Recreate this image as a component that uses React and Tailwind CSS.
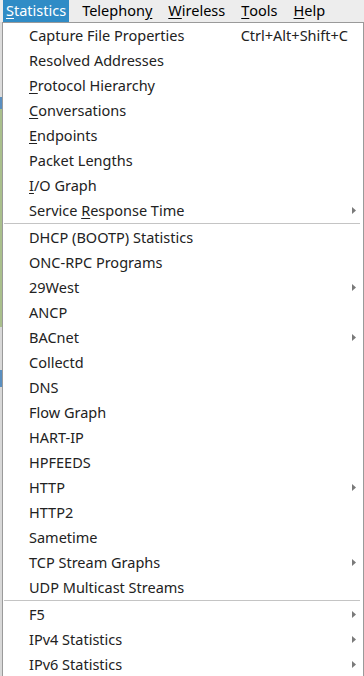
const items = [
  { label: 'Capture File Properties', shortcut: 'Ctrl+Alt+Shift+C' },
  { label: 'Resolved Addresses' },
  { label: 'Protocol Hierarchy', u: 0 },
  { label: 'Conversations', u: 0 },
  { label: 'Endpoints', u: 0 },
  { label: 'Packet Lengths' },
  { label: 'I/O Graph', u: 0 },
  { label: 'Service Response Time', u: 8, sub: true },
  'sep',
  { label: 'DHCP (BOOTP) Statistics' },
  { label: 'ONC-RPC Programs' },
  { label: '29West', sub: true },
  { label: 'ANCP' },
  { label: 'BACnet', sub: true },
  { label: 'Collectd' },
  { label: 'DNS' },
  { label: 'Flow Graph' },
  { label: 'HART-IP' },
  { label: 'HPFEEDS' },
  { label: 'HTTP', sub: true },
  { label: 'HTTP2' },
  { label: 'Sametime' },
  { label: 'TCP Stream Graphs', sub: true },
  { label: 'UDP Multicast Streams' },
  'sep',
  { label: 'F5', sub: true },
  { label: 'IPv4 Statistics', sub: true },
  { label: 'IPv6 Statistics', sub: true },
]

const menus = [
  { label: 'Statistics', u: 0, active: true },
  { label: 'Telephony', u: 8 },
  { label: 'Wireless', u: 0 },
  { label: 'Tools', u: 0 },
  { label: 'Help', u: 0 },
]

function Mnemonic({ text, u }) {
  if (u === undefined) return text
  return (
    <>
      {text.slice(0, u)}
      <span className="underline underline-offset-2">{text[u]}</span>
      {text.slice(u + 1)}
    </>
  )
}

function Arrow() {
  return (
    <svg width="5" height="7" viewBox="0 0 5 7" className="text-[#7a7a7a]">
      <path d="M0 0L4 3.5L0 7Z" fill="currentColor" />
    </svg>
  )
}

export default function App() {
  return (
    <div
      className="w-[364px] h-[676px] overflow-hidden bg-white text-[#222] text-[14.5px]"
      style={{ fontFamily: '"Noto Sans", "Open Sans", sans-serif' }}
    >
      <div className="h-[22px] bg-[#ededed] flex items-stretch pl-[3px]">
        {menus.map((m) => (
          <div
            key={m.label}
            className={`flex items-center px-[3px] mr-[10px] ${
              m.active ? 'bg-[#308cc6] text-white' : 'text-black'
            }`}
          >
            <Mnemonic text={m.label} u={m.u} />
          </div>
        ))}
      </div>

      <div className="flex h-[654px]">
        <div className="w-[2px] flex flex-col">
          <div className="h-[75px] bg-[#dcdcdc]" />
          <div className="h-[12px] bg-[#5a8fc0]" />
          <div className="h-[218px] bg-[#a9bf8c]" />
          <div className="h-[43px] bg-[#d8d8d8]" />
          <div className="h-[17px] bg-[#5a8fc0]" />
          <div className="flex-1 bg-[#d8d8d8]" />
        </div>
        <div className="flex-1 border border-[#9a9a9a] border-b-0 bg-white">
          {items.map((it, i) =>
            it === 'sep' ? (
              <div key={i} className="h-[2px] pl-[1px] pr-[3px]">
                <div className="h-[1px] w-full bg-[#c4c4c4]" />
              </div>
            ) : (
              <div key={i} className="h-[25px] flex items-center pl-[26px] pr-[6px]">
                <span className="flex-1 whitespace-nowrap">
                  <Mnemonic text={it.label} u={it.u} />
                </span>
                {it.shortcut && <span className="mr-[9px] whitespace-nowrap">{it.shortcut}</span>}
                {it.sub && <Arrow />}
              </div>
            )
          )}
        </div>
      </div>
    </div>
  )
}
